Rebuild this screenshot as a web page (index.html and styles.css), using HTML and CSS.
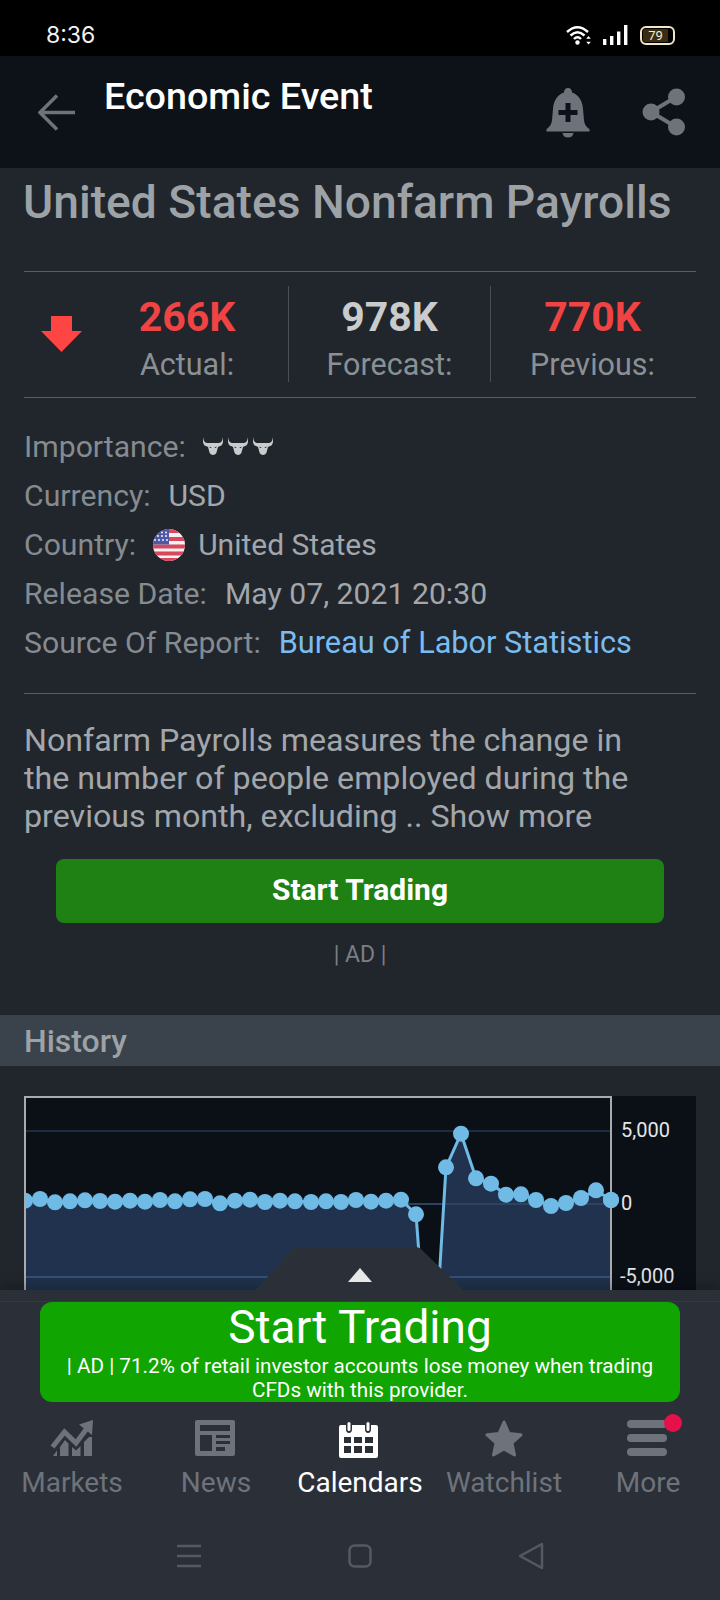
FILE: index.html
```html
<!DOCTYPE html>
<html lang="en">
<head>
<meta charset="utf-8">
<title>Economic Event</title>
<link rel="stylesheet" href="styles.css">
</head>
<body>
<div class="app">
  <div class="statusbar">
    <span class="clock">8:36</span>
    <div class="status-icons">
      <svg class="ic-wifi" width="27" height="20" viewBox="0 0 27 20">
        <g class="st-line"><path d="M1 7 Q11.5 -2.5 22 7"/><path d="M4.5 10.5 Q11.5 4 18.5 10.5"/><path d="M8 14 Q11.5 10.5 15 14"/></g>
        <circle class="st-fill" cx="11.5" cy="17.5" r="2.2"/>
        <path class="st-fill" d="M22.5 11 l2.3 2.8 h-4.6z M22.5 19.5 l2.3 -2.8 h-4.6z"/>
      </svg>
      <svg class="ic-signal" width="25" height="20" viewBox="0 0 25 20">
        <rect class="st-fill" x="0" y="14" width="3.4" height="6"/>
        <rect class="st-fill" x="7" y="11" width="3.4" height="9"/>
        <rect class="st-fill" x="14" y="6.500" width="3.4" height="13.500"/>
        <rect class="st-fill" x="21" y="0" width="3.4" height="20"/>
      </svg>
      <span class="battery"><span class="battery-level">79</span></span>
    </div>
  </div>

  <header class="topbar">
    <svg class="back" width="38" height="37" viewBox="0 0 38 37"><path d="M19 1.500 L2 18.500 L19 35.500 M2 18.500 H37"/></svg>
    <h2 class="topbar-title">Economic Event</h2>
    <svg class="bell" width="44" height="50" viewBox="0 0 44 50">
      <path class="ic-fill" fill-rule="evenodd" d="M22 0 C24.500 0 26 2 26 4.500 C33 7 36.500 13 37 21 L38 32 C38.500 37 41 39.500 43.500 41 L43.500 43.500 H0.500 L0.500 41 C3 39.500 5.500 37 6 32 L7 21 C7.500 13 11 7 18 4.500 C18 2 19.500 0 22 0 Z M19.500 15 V22 H12.500 V27 H19.500 V34 H24.500 V27 H31.500 V22 H24.500 V15 Z"/>
      <path class="ic-fill" d="M16.500 45 H27.500 C27 48 25 49.500 22 49.500 C19 49.500 17 48 16.500 45 Z"/>
    </svg>
    <svg class="share" width="44" height="48" viewBox="0 0 44 48">
      <path class="share-line" d="M34 9 L9 24 L34 39"/>
      <circle class="ic-fill" cx="34.500" cy="9" r="8.500"/>
      <circle class="ic-fill" cx="9" cy="24" r="8.500"/>
      <circle class="ic-fill" cx="34.500" cy="39" r="8.500"/>
    </svg>
  </header>

  <main class="content">
    <h1 class="title">United States Nonfarm Payrolls</h1>

    <section class="stats">
      <div class="stat-arrow">
        <svg width="41" height="36" viewBox="0 0 41 36"><path d="M10 0 H31 V15 H41 L20.500 36 L0 15 H10 Z"/></svg>
      </div>
      <div class="stat">
        <span class="stat-value down">266K</span>
        <span class="stat-label">Actual:</span>
      </div>
      <div class="stat">
        <span class="stat-value">978K</span>
        <span class="stat-label">Forecast:</span>
      </div>
      <div class="stat">
        <span class="stat-value down">770K</span>
        <span class="stat-label">Previous:</span>
      </div>
    </section>

    <section class="facts">
      <div class="fact">
        <span class="fact-label">Importance:</span>
        <span class="bulls">
          <svg class="bull" width="20" height="18" viewBox="0 0 20 18"><path fill-rule="evenodd" d="M0.500 0 C0 3 1.500 5.500 4 6 H16 C18.500 5.500 20 3 19.500 0 C21 4.500 19.500 8.500 17 9 L15 10 L13.500 15.500 C13 17 11.500 18 10 18 C8.500 18 7 17 6.500 15.500 L5 10 L3 9 C0.500 8.500 -1 4.500 0.500 0 Z M6.500 9.500 L8.800 11 L6.900 11 Z M13.500 9.500 L11.200 11 L13.100 11 Z"/></svg>
          <svg class="bull" width="20" height="18" viewBox="0 0 20 18"><path fill-rule="evenodd" d="M0.500 0 C0 3 1.500 5.500 4 6 H16 C18.500 5.500 20 3 19.500 0 C21 4.500 19.500 8.500 17 9 L15 10 L13.500 15.500 C13 17 11.500 18 10 18 C8.500 18 7 17 6.500 15.500 L5 10 L3 9 C0.500 8.500 -1 4.500 0.500 0 Z M6.500 9.500 L8.800 11 L6.900 11 Z M13.500 9.500 L11.200 11 L13.100 11 Z"/></svg>
          <svg class="bull" width="20" height="18" viewBox="0 0 20 18"><path fill-rule="evenodd" d="M0.500 0 C0 3 1.500 5.500 4 6 H16 C18.500 5.500 20 3 19.500 0 C21 4.500 19.500 8.500 17 9 L15 10 L13.500 15.500 C13 17 11.500 18 10 18 C8.500 18 7 17 6.500 15.500 L5 10 L3 9 C0.500 8.500 -1 4.500 0.500 0 Z M6.500 9.500 L8.800 11 L6.900 11 Z M13.500 9.500 L11.200 11 L13.100 11 Z"/></svg>
        </span>
      </div>
      <div class="fact"><span class="fact-label">Currency:</span><span class="fact-value">USD</span></div>
      <div class="fact">
        <span class="fact-label">Country:</span>
        <svg class="flag" width="32" height="32" viewBox="0 0 32 32">
          <defs><clipPath id="flag-clip"><circle cx="16" cy="16" r="16"/></clipPath></defs>
          <g clip-path="url(#flag-clip)">
            <rect class="flag-white" width="32" height="32"/>
            <rect class="flag-red" y="0" width="32" height="4"/>
            <rect class="flag-red" y="8" width="32" height="4"/>
            <rect class="flag-red" y="15.500" width="32" height="4"/>
            <rect class="flag-red" y="22.500" width="32" height="4"/>
            <rect class="flag-red" y="29" width="32" height="3"/>
            <rect class="flag-blue" width="16" height="15.500"/>
            <g class="flag-white">
              <circle cx="9" cy="3.500" r="1"/><circle cx="13" cy="3.500" r="1"/>
              <circle cx="5" cy="7" r="1"/><circle cx="9" cy="7" r="1"/><circle cx="13" cy="7" r="1"/>
              <circle cx="2" cy="11" r="1"/><circle cx="6" cy="11" r="1"/><circle cx="10" cy="11" r="1"/><circle cx="14" cy="11" r="1"/>
            </g>
          </g>
        </svg>
        <span class="fact-value fact-value-flag">United States</span>
      </div>
      <div class="fact"><span class="fact-label">Release Date:</span><span class="fact-value">May 07, 2021 20:30</span></div>
      <div class="fact"><span class="fact-label">Source Of Report:</span><span class="fact-link">Bureau of Labor Statistics</span></div>
    </section>

    <p class="description">Nonfarm Payrolls measures the change in the number of people employed during the previous month, excluding .. Show more</p>

    <a class="cta">Start Trading</a>
    <div class="ad-note">| AD |</div>

    <div class="section-head">History</div>

    <svg class="chart" width="672" height="204" viewBox="0 0 672 204">
      <defs><clipPath id="plot-clip"><rect x="0" y="0" width="672" height="204"/></clipPath></defs>
      <rect class="chart-bg" width="672" height="204"/>
      <g clip-path="url(#plot-clip)">
        <polygon class="chart-area" points="1,204 1,104.700 16,103 31,106.300 46,105.300 61,104.300 76,105 91,105.700 106,104.700 121,105.700 136,104 151,105.300 166,103.300 181,103 196,107.300 211,104.700 226,103.700 241,106 256,104.700 271,105.300 287,106 302,105.300 317,106 332,104 347,105.700 362,104.700 377,103.700 392,118.300 407,317 422,71.300 437,37.700 452,82.300 467,87.700 482,98.700 497,98.300 512,104 527,110 542,107 557,102 572,94.300 587,104 587,204"/>
        <line class="grid-a" x1="1" y1="35" x2="587" y2="35"/>
        <line class="grid-b" x1="1" y1="108" x2="587" y2="108"/>
        <line class="grid-c" x1="1" y1="181" x2="587" y2="181"/>
        <polyline class="chart-line" points="1,104.700 16,103 31,106.300 46,105.300 61,104.300 76,105 91,105.700 106,104.700 121,105.700 136,104 151,105.300 166,103.300 181,103 196,107.300 211,104.700 226,103.700 241,106 256,104.700 271,105.300 287,106 302,105.300 317,106 332,104 347,105.700 362,104.700 377,103.700 392,118.300 407,317 422,71.300 437,37.700 452,82.300 467,87.700 482,98.700 497,98.300 512,104 527,110 542,107 557,102 572,94.300 587,104"/>
        <g class="chart-dots">
          <circle cx="1" cy="104.700" r="8"/><circle cx="16" cy="103" r="8"/><circle cx="31" cy="106.300" r="8"/><circle cx="46" cy="105.300" r="8"/><circle cx="61" cy="104.300" r="8"/><circle cx="76" cy="105" r="8"/><circle cx="91" cy="105.700" r="8"/><circle cx="106" cy="104.700" r="8"/><circle cx="121" cy="105.700" r="8"/><circle cx="136" cy="104" r="8"/><circle cx="151" cy="105.300" r="8"/><circle cx="166" cy="103.300" r="8"/><circle cx="181" cy="103" r="8"/><circle cx="196" cy="107.300" r="8"/><circle cx="211" cy="104.700" r="8"/><circle cx="226" cy="103.700" r="8"/><circle cx="241" cy="106" r="8"/><circle cx="256" cy="104.700" r="8"/><circle cx="271" cy="105.300" r="8"/><circle cx="287" cy="106" r="8"/><circle cx="302" cy="105.300" r="8"/><circle cx="317" cy="106" r="8"/><circle cx="332" cy="104" r="8"/><circle cx="347" cy="105.700" r="8"/><circle cx="362" cy="104.700" r="8"/><circle cx="377" cy="103.700" r="8"/><circle cx="392" cy="118.300" r="8"/><circle cx="422" cy="71.300" r="8"/><circle cx="437" cy="37.700" r="8"/><circle cx="452" cy="82.300" r="8"/><circle cx="467" cy="87.700" r="8"/><circle cx="482" cy="98.700" r="8"/><circle cx="497" cy="98.300" r="8"/><circle cx="512" cy="104" r="8"/><circle cx="527" cy="110" r="8"/><circle cx="542" cy="107" r="8"/><circle cx="557" cy="102" r="8"/><circle cx="572" cy="94.300" r="8"/><circle cx="587" cy="104" r="8"/>
        </g>
      </g>
      <path class="plot-border" d="M1 204 V1 H587 V204"/>
      <circle class="dot-over" cx="587" cy="104" r="8"/>
      <text class="axis" x="597" y="41">5,000</text>
      <text class="axis" x="597" y="114">0</text>
      <text class="axis" x="596" y="187">-5,000</text>
    </svg>
  </main>

  <div class="sheet">
    <svg class="handle" width="210" height="44" viewBox="0 0 210 44">
      <path class="handle-bg" d="M0 44 L36 4 Q39.500 0 45 0 H160 Q165 0 168 4 L209 44 Z"/>
      <polygon class="handle-arrow" points="105,21 117,35 93,35"/>
    </svg>
    <div class="sheet-line"></div>
    <a class="banner">
      <span class="banner-title">Start Trading</span>
      <span class="banner-sub">| AD | 71.2% of retail investor accounts lose money when trading CFDs with this provider.</span>
    </a>
    <nav class="tabs">
      <div class="tab">
        <svg width="48" height="40" viewBox="0 0 48 40">
          <path class="tab-fill" d="M5 36 L9 30.500 V36 Z M12 36 V27 L17 20 L20.500 23.500 V36 Z M24 36 V27 L28 30.500 L32.500 26 V36 Z M36 36 V22 L41 17 L44 17 V36 Z"/>
          <path class="tab-stroke" d="M4.500 27 L16.500 12 L28 23 L40 7"/>
          <path class="tab-fill" d="M31 4.500 L45 0 L44 15 Z"/>
        </svg>
        <span>Markets</span>
      </div>
      <div class="tab">
        <svg width="48" height="40" viewBox="0 0 48 40">
          <path class="tab-fill" fill-rule="evenodd" d="M5 0 H41 Q43 0 43 2 V34 Q43 36 41 36 H5 Q3 36 3 34 V2 Q3 0 5 0 Z M8 5 V11 H38 V5 Z M8 15 V31 H20 V15 Z M24 15 V18 H38 V15 Z M24 21 V24 H38 V21 Z M24 27 V31 H33 V27 Z"/>
        </svg>
        <span>News</span>
      </div>
      <div class="tab tab-active">
        <svg width="48" height="40" viewBox="0 0 48 40">
          <path class="tab-fill" fill-rule="evenodd" d="M5 5 H10 V9 Q10 13 13 13 Q16 13 16 9 V5 H29 V9 Q29 13 32 13 Q35 13 35 9 V5 H40 Q42 5 42 7 V36 Q42 38 40 38 H5 Q3 38 3 36 V7 Q3 5 5 5 Z M8 17 V23 H15 V17 Z M18 17 V23 H26 V17 Z M29 17 V23 H37 V17 Z M8 26 V33 H15 V26 Z M18 26 V33 H26 V26 Z M29 26 V33 H37 V26 Z"/>
          <rect class="tab-fill" x="11.500" y="2" width="3" height="9" rx="1.500"/>
          <rect class="tab-fill" x="30.500" y="2" width="3" height="9" rx="1.500"/>
        </svg>
        <span>Calendars</span>
      </div>
      <div class="tab">
        <svg width="48" height="40" viewBox="0 0 48 40">
          <path class="tab-star" d="M24 2 L29 13.500 L41 14.800 L32 23 L34.500 35 L24 29 L13.500 35 L16 23 L7 14.800 L19 13.500 Z"/>
        </svg>
        <span>Watchlist</span>
      </div>
      <div class="tab tab-more">
        <svg width="48" height="40" viewBox="0 0 48 40">
          <rect class="tab-fill" x="3" y="0" width="40" height="8" rx="4"/>
          <rect class="tab-fill" x="3" y="14" width="40" height="8" rx="4"/>
          <rect class="tab-fill" x="3" y="28" width="40" height="8" rx="4"/>
        </svg>
        <span class="badge"></span>
        <span>More</span>
      </div>
    </nav>
    <div class="sysnav">
      <svg width="26" height="24" viewBox="0 0 26 24"><path class="sys" d="M1 2 H25 M1 12 H25 M1 22 H25"/></svg>
      <svg width="24" height="24" viewBox="0 0 24 24"><rect class="sys" x="1.500" y="1.500" width="21" height="21" rx="5"/></svg>
      <svg width="26" height="28" viewBox="0 0 26 28"><path class="sys sys-round" d="M24 2 V26 L2 14 Z"/></svg>
    </div>
  </div>
</div>
</body>
</html>
```

FILE: styles.css
```css
* { box-sizing: border-box; }
html, body { margin: 0; padding: 0; background: #20262c; }
body { font-family: Roboto, "Liberation Sans", sans-serif; }

.app {
  position: relative;
  width: 720px;
  height: 1600px;
  overflow: hidden;
  background: #20262c;
}

/* status bar */
.statusbar {
  height: 56px;
  background: #000;
  display: flex;
  align-items: center;
  justify-content: space-between;
  padding: 14px 45px 0 46px;
}
.clock { font-family: Inter, Roboto, sans-serif; font-size: 23px; font-weight: 400; color: #f2f2f2; letter-spacing: 0; }
.status-icons { display: flex; align-items: center; gap: 10px; }
.st-line { fill: none; stroke: #fff; stroke-width: 2.4; }
.st-fill { fill: #fff; }
.battery {
  width: 35px;
  height: 19px;
  margin-left: 2px;
  border: 2px solid #f1e6c8;
  border-radius: 6px;
  padding: 1px;
  display: flex;
}
.battery-level {
  width: 25px;
  background: #3a2d12;
  color: #f4ecd6;
  font-size: 13px;
  line-height: 13px;
  text-align: center;
  border-radius: 2px 0 0 2px;
}

/* top bar */
.topbar {
  height: 112px;
  background: #0d1219;
  display: flex;
  align-items: flex-start;
  padding: 38px 34px 0 38px;
}
.back { fill: none; stroke: #6e737b; stroke-width: 3.5; margin-right: 29px; flex: none; }
.topbar-title {
  margin: -22px 0 0 -1px;
  flex: 1;
  font-size: 37.700px;
  line-height: 48px;
  font-weight: 500;
  color: #fff;
}
.ic-fill { fill: #6e737b; }
.bell { margin: -6px 52px 0 0; flex: none; }
.share { margin-top: -6px; flex: none; }
.share-line { fill: none; stroke: #6e737b; stroke-width: 4; }

/* main */
.title {
  margin: 9px 0 0 23px;
  font-size: 46.200px;
  line-height: 50px;
  font-weight: 500;
  color: #9da2a7;
  white-space: nowrap;
}
.stats {
  margin: 44px 24px 0;
  height: 127px;
  border-top: 1px solid #5a5f63;
  border-bottom: 1px solid #5a5f63;
  padding: 14px 0 13px;
  display: grid;
  grid-template-columns: 62px 202px 202px 204px;
  grid-template-rows: 96px;
}
.stat-arrow { display: flex; align-items: center; justify-content: center; padding-left: 12px; fill: #ff4444; }
.stat {
  display: flex;
  flex-direction: column;
  align-items: center;
  border-left: 1px solid #4a4f54;
}
.stat-arrow + .stat { border-left: 0; }
.stat-value { font-size: 41px; line-height: 44px; font-weight: 700; color: #c9cbcd; margin-top: 9px; }
.stat-value.down { color: #f04444; }
.stat-label { font-size: 30.500px; line-height: 44px; color: #8b9095; margin-top: 4px; }

.facts { margin: 24px 24px 0; padding-bottom: 26px; border-bottom: 1px solid #5a5f63; }
.fact { height: 49px; display: flex; align-items: center; font-size: 30.200px; white-space: nowrap; }
.fact-label { color: #868b90; }
.fact-value { color: #a3a7ab; margin-left: 18px; font-size: 30.200px; }
.fact-value-flag { margin-left: 13px; font-size: 30px; }
.fact-link { color: #7bbcf0; margin-left: 18px; font-size: 30.700px; }
.bulls { display: flex; gap: 5px; margin-left: 17px; margin-top: -2px; }
.bull { fill: #c9cbcd; }
.flag { margin-left: 17px; flex: none; }
.flag-white { fill: #f1f1f1; }
.flag-red { fill: #d9475c; }
.flag-blue { fill: #4f58a8; }

.description {
  margin: 27px 56px 0 24px;
  font-size: 32.200px;
  line-height: 38px;
  color: #a3a7ab;
}
.cta {
  display: block;
  margin: 24px 56px 0;
  height: 64px;
  border-radius: 8px;
  background: #1f8013;
  color: #fff;
  font-size: 30px;
  font-weight: 700;
  line-height: 62px;
  text-align: center;
}
.ad-note { margin-top: 18px; font-size: 23px; line-height: 28px; color: #7a7f84; text-align: center; }
.section-head {
  margin-top: 46px;
  height: 51px;
  background: #3a424b;
  padding-left: 24px;
  font-size: 32px;
  font-weight: 500;
  line-height: 53px;
  color: #9da2a7;
}
.chart { display: block; margin: 30px 24px 0; overflow: visible; }
.chart-bg { fill: #0b1017; }
.chart-area { fill: #20324d; }
.grid-a { stroke: #1d2c3f; stroke-width: 2; }
.grid-b { stroke: #2d425f; stroke-width: 2; }
.grid-c { stroke: #34507a; stroke-width: 2; }
.chart-line { fill: none; stroke: #6fbbe6; stroke-width: 3; }
.chart-dots, .dot-over { fill: #6fbbe6; }
.plot-border { fill: none; stroke: #a9abad; stroke-width: 2; }
.axis { font-family: Roboto, sans-serif; font-size: 20px; fill: #e4e6e8; }

/* bottom sheet */
.sheet {
  position: absolute;
  left: 0;
  right: 0;
  bottom: 0;
  height: 310px;
  background: #2b3038;
  box-shadow: 0 -5px 12px rgba(0, 0, 0, .22);
  display: flex;
  flex-direction: column;
}
.handle { position: absolute; top: -43px; left: 255px; }
.handle-bg { fill: #2b3038; }
.handle-arrow { fill: #e8e8e8; }
.sheet-line { height: 1px; margin-top: 11px; background: #353a42; }
.banner {
  display: flex;
  flex-direction: column;
  align-items: center;
  height: 100px;
  margin: 0 40px;
  border-radius: 12px;
  background: #10a500;
  color: #fff;
  text-align: center;
}
.banner-title { font-size: 46px; line-height: 50px; }
.banner-sub { font-size: 20.700px; line-height: 24px; padding: 0 20px; margin-top: 2px; }
.tabs { display: flex; margin-top: 18px; }
.tab {
  position: relative;
  width: 144px;
  display: flex;
  flex-direction: column;
  align-items: center;
  font-size: 28px;
  line-height: 44px;
  color: #6e737b;
  white-space: nowrap;
}
.tab svg { display: block; }
.tab span { margin-top: 1px; }
.tab-fill { fill: #6e737b; }
.tab-stroke { fill: none; stroke: #6e737b; stroke-width: 5; }
.tab-star { fill: #6e737b; stroke: #6e737b; stroke-width: 3; stroke-linejoin: round; }
.tab-active { color: #fff; }
.tab-active .tab-fill { fill: #fff; }
.tab .badge {
  position: absolute;
  top: -6px;
  left: 88px;
  width: 18px;
  height: 18px;
  margin: 0;
  border-radius: 50%;
  background: #e6114b;
}
.sysnav {
  display: flex;
  justify-content: center;
  align-items: center;
  gap: 146px;
  margin-top: 37px;
}
.sys { fill: none; stroke: #555a60; stroke-width: 2.500; }
.sys-round { stroke-linejoin: round; }
```
